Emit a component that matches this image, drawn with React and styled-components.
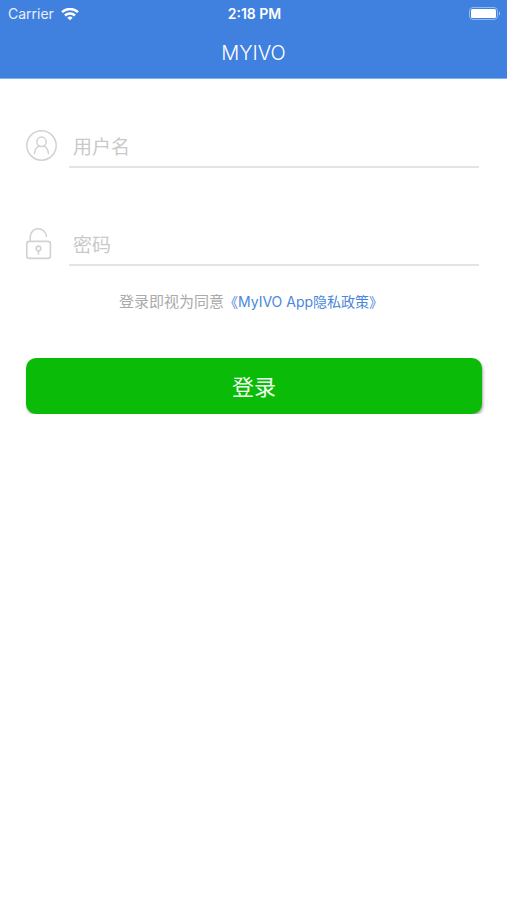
import React from "react";
import styled, { createGlobalStyle } from "styled-components";

const GlobalStyle = createGlobalStyle`
  *, *::before, *::after {
    box-sizing: border-box;
  }
  body {
    margin: 0;
    background: #fff;
    font-family: Inter, "Noto Sans CJK SC", sans-serif;
  }
`;

const Header = styled.header`
  background: #4080df;
  border-bottom: 1px solid #7db2f3;
  color: #fff;
`;

const StatusBar = styled.div`
  display: grid;
  grid-template-columns: 1fr auto 1fr;
  align-items: center;
  height: 28px;
  padding: 0 6px 0 8px;
  font-size: 14px;
  line-height: 20px;
`;

const Carrier = styled.div`
  display: flex;
  align-items: center;
  gap: 7px;
  color: #e6effc;
`;

const Clock = styled.time`
  font-size: 14px;
  font-weight: 600;
`;

const BatterySlot = styled.div`
  display: flex;
  justify-content: flex-end;
`;

const Title = styled.h1`
  margin: 0;
  padding: 13px 0;
  font-size: 20px;
  line-height: 24px;
  font-weight: 300;
  text-align: center;
`;

const Form = styled.form`
  display: flex;
  flex-direction: column;
  padding: 46px 25px 0 26px;
`;

const Field = styled.label`
  display: flex;
  align-items: flex-start;
  gap: 12px;
  height: 43px;
  margin: 0 3px 55px 0;
  color: #d2d2d2;

  svg {
    flex: none;
    margin-top: 5px;
  }
`;

const TextInput = styled.input`
  flex: 1;
  min-width: 0;
  height: 43px;
  padding: 4px 4px 0;
  border: 0;
  border-bottom: 2px solid #e4e4e4;
  border-radius: 0;
  outline: 0;
  background: transparent;
  color: #333;
  font-family: inherit;
  font-size: 19px;

  &::placeholder {
    color: #c9c9c9;
    opacity: 1;
  }
`;

const Consent = styled.p`
  margin: -31px 0 0;
  padding-right: 6px;
  color: #aaa;
  font-size: 15px;
  line-height: 24px;
  text-align: center;
`;

const PolicyLink = styled.a`
  color: #4a87dc;
  font-size: 14px;
  text-decoration: none;
`;

const SubmitButton = styled.button`
  height: 56px;
  margin-top: 44px;
  padding: 0 0 3px;
  border: 0;
  border-radius: 10px;
  background: #0abb07;
  box-shadow: 1px 2px 3px rgba(0, 0, 0, 0.35);
  color: #f2fcf2;
  font-family: inherit;
  font-size: 22px;
`;

const WifiIcon = () => (
  <svg width="18" height="13" viewBox="0 0 18 13" fill="none" stroke="#fff" strokeWidth="2.5" aria-hidden="true">
    <path d="M1 4.2a11.5 11.5 0 0 1 16 0" />
    <path d="M4 7.5a7.2 7.2 0 0 1 10 0" />
    <path d="M9 12.3 6.3 9.7a3.9 3.9 0 0 1 5.4 0z" fill="#fff" stroke="none" />
  </svg>
);

const BatteryIcon = () => (
  <svg width="33" height="14" viewBox="0 0 33 14" aria-hidden="true">
    <rect x="1.5" y="0.5" width="28" height="12" rx="3.5" fill="none" stroke="#92b9f0" />
    <rect x="3" y="2" width="25" height="9" rx="1.5" fill="#fff" />
    <path d="M31 4.5v4c1.6-.6 1.6-3.4 0-4z" fill="#a4c5f5" />
  </svg>
);

const UserIcon = () => (
  <svg width="31" height="32" viewBox="0 0 31 32" fill="none" stroke="currentColor" strokeWidth="1.5" strokeLinecap="round" aria-hidden="true">
    <circle cx="15.5" cy="15.5" r="14.7" />
    <circle cx="15.5" cy="11.8" r="4.7" />
    <path d="M8.5 23.5c.5-3.8 2.2-6.4 4.7-7.6M22.5 23.5c-.5-3.8-2.2-6.4-4.7-7.6" />
  </svg>
);

const LockIcon = () => (
  <svg width="31" height="32" viewBox="0 0 31 32" fill="none" stroke="currentColor" strokeWidth="1.6" strokeLinecap="round" aria-hidden="true">
    <rect x="0.8" y="13.4" width="23.6" height="17" rx="2.5" />
    <path d="M4.2 13V9C4.2 4.1 7.9 0.8 12.2 0.8c4.3 0 7.9 3.3 8.3 7.7" />
    <circle cx="12.5" cy="20.4" r="2.3" />
    <path d="M12.5 22.7v3.2" />
  </svg>
);

export default function App() {
  return (
    <>
      <GlobalStyle />
      <Header>
        <StatusBar>
          <Carrier>
            Carrier
            <WifiIcon />
          </Carrier>
          <Clock>2:18 PM</Clock>
          <BatterySlot>
            <BatteryIcon />
          </BatterySlot>
        </StatusBar>
        <Title>MYIVO</Title>
      </Header>
      <main>
        <Form onSubmit={(event) => event.preventDefault()}>
          <Field>
            <UserIcon />
            <TextInput type="text" name="username" placeholder="用户名" aria-label="用户名" autoComplete="username" />
          </Field>
          <Field>
            <LockIcon />
            <TextInput type="password" name="password" placeholder="密码" aria-label="密码" autoComplete="current-password" />
          </Field>
          <Consent>
            登录即视为同意<PolicyLink href="#privacy">《MyIVO App隐私政策》</PolicyLink>
          </Consent>
          <SubmitButton type="submit">登录</SubmitButton>
        </Form>
      </main>
    </>
  );
}
